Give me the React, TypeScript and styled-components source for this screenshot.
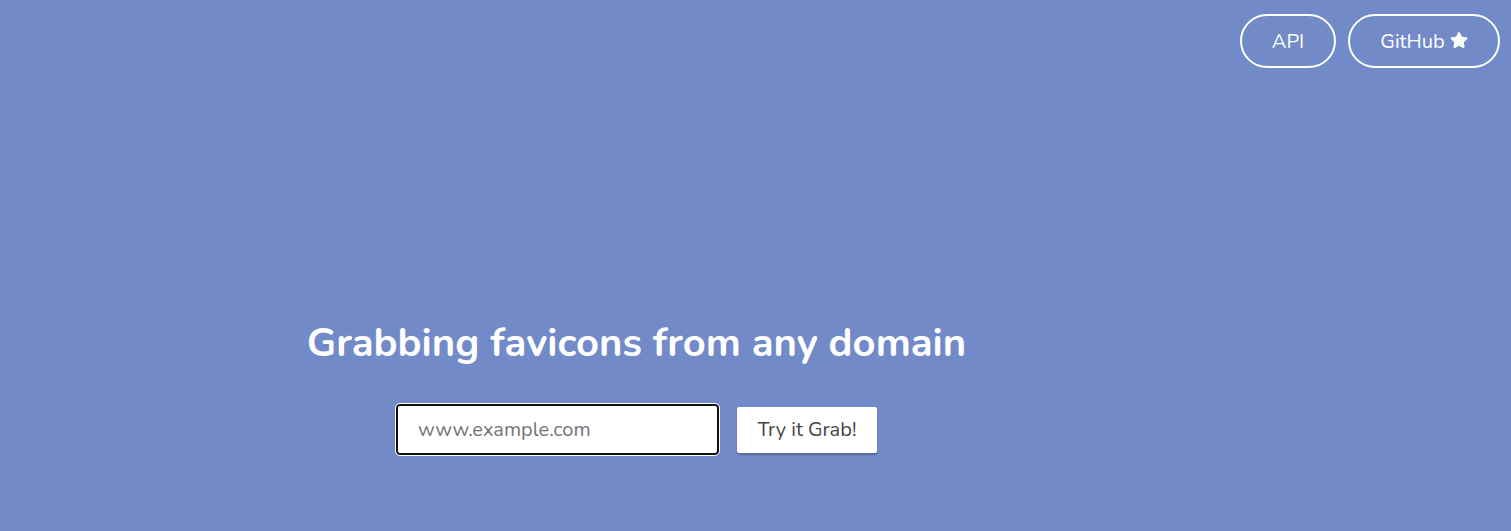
import React from "react";
import styled, { createGlobalStyle } from "styled-components";
import { FaStar } from "react-icons/fa";

const Global = createGlobalStyle`
  html, body { margin: 0; padding: 0; }
  body {
    background: #728bc8;
    font-family: "Nunito", "Lato", "Open Sans", sans-serif;
    color: #fff;
  }
`;

const Page = styled.div`
  min-height: 531px;
  display: flex;
  flex-direction: column;
`;

const Nav = styled.nav`
  display: flex;
  justify-content: flex-end;
  gap: 12px;
  padding: 14px 11px 0 0;
`;

const PillLink = styled.a<{ $w: number }>`
  box-sizing: border-box;
  width: ${(p) => p.$w}px;
  height: 54px;
  border: 2px solid #fff;
  border-radius: 27px;
  display: flex;
  align-items: center;
  justify-content: center;
  gap: 5px;
  color: #fff;
  text-decoration: none;
  font-size: 20px;
  svg { width: 18px; height: 18px; margin-top: -2px; }
`;

const Hero = styled.main`
  display: grid;
  grid-template-columns: 1273px 1fr;
  padding-top: 249px;
`;

const Column = styled.section`
  display: flex;
  flex-direction: column;
  align-items: center;
`;

const Title = styled.h1`
  margin: 0;
  font-size: 40px;
  font-weight: 700;
  line-height: 52px;
`;

const Form = styled.form`
  display: flex;
  align-items: center;
  gap: 18px;
  margin-top: 35px;
`;

const Input = styled.input`
  box-sizing: border-box;
  width: 323px;
  height: 51px;
  border: 2px solid #111;
  outline: 1px solid #fff;
  border-radius: 4px;
  padding: 0 20px;
  font-family: inherit;
  font-size: 20px;
  color: #333;
  background: #fff;
  &::placeholder { color: #757575; }
`;

const Button = styled.button`
  box-sizing: border-box;
  width: 140px;
  height: 46px;
  border: none;
  border-radius: 2px;
  background: #fff;
  color: #444;
  font-family: inherit;
  font-size: 20px;
  padding: 0;
  box-shadow: 0 2px 2px rgba(0, 0, 0, 0.25);
`;

export default function App() {
  return (
    <Page>
      <Global />
      <Nav>
        <PillLink $w={96} href="#">API</PillLink>
        <PillLink $w={152} href="#">
          GitHub <FaStar />
        </PillLink>
      </Nav>
      <Hero>
        <Column>
          <Title>Grabbing favicons from any domain</Title>
          <Form onSubmit={(e) => e.preventDefault()}>
            <Input placeholder="www.example.com" />
            <Button type="submit">Try it Grab!</Button>
          </Form>
        </Column>
        <div />
      </Hero>
    </Page>
  );
}
